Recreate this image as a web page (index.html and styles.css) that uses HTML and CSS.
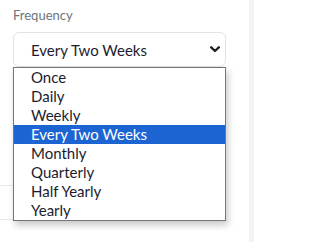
FILE: index.html
```html
<!DOCTYPE html>
<html>
<head>
<meta charset="utf-8">
<link rel="stylesheet" href="styles.css">
</head>
<body>
<div class="page">
  <main class="content">
    <label class="label">Frequency</label>
    <div class="field">
      <div class="select">
        <span class="value">Every Two Weeks</span>
        <svg class="chev" width="10" height="7" viewBox="0 0 10 7"><path d="M1.2 1.3 L5 5 L8.8 1.3" fill="none" stroke="#222" stroke-width="2.4" stroke-linecap="round" stroke-linejoin="round"/></svg>
      </div>
      <ul class="menu">
        <li>Once</li>
        <li>Daily</li>
        <li>Weekly</li>
        <li class="active">Every Two Weeks</li>
        <li>Monthly</li>
        <li>Quarterly</li>
        <li>Half Yearly</li>
        <li>Yearly</li>
      </ul>
    </div>
    <div class="rules">
      <div class="rule"></div>
      <div class="rule"></div>
    </div>
  </main>
  <aside class="strip"></aside>
</div>
</body>
</html>
```
FILE: styles.css
```css
html, body {
  margin: 0;
  padding: 0;
  background: #fff;
}
body {
  font-family: "Lato", "Open Sans", sans-serif;
  color: #212529;
}
.page {
  display: grid;
  grid-template-columns: 249px 5px;
  width: 254px;
  height: 242px;
}
.strip {
  background: #f1f3f5;
}
.content {
  display: flex;
  flex-direction: column;
}
.label {
  display: block;
  margin: 7px 0 0 13px;
  height: 25px;
  font-size: 13px;
  color: #6c757d;
  line-height: 17px;
}
.field {
  position: relative;
  margin-left: 13px;
  width: 213px;
}
.select {
  box-sizing: border-box;
  height: 35px;
  border: 1px solid #dfe3e8;
  border-radius: 6px;
  display: flex;
  align-items: center;
  justify-content: space-between;
  padding: 0 5px 0 17px;
  font-size: 15px;
  color: #1c1c2e;
}
.chev {
  display: block;
  margin-right: 0;
}
.menu {
  position: absolute;
  top: 35px;
  left: 0;
  width: 213px;
  box-sizing: border-box;
  margin: 0;
  padding: 0;
  list-style: none;
  background: #fff;
  border: 1px solid #767676;
  box-shadow: 2px 4px 7px rgba(0, 0, 0, 0.22);
  z-index: 2;
}
.menu li {
  height: 19px;
  line-height: 19px;
  padding-left: 17px;
  font-size: 15px;
  color: #1c1c2e;
}
.menu li.active {
  background: #1b64d2;
  color: #fff;
}
.rules {
  margin-top: 118px;
  display: flex;
  flex-direction: column;
  gap: 33px;
}
.rule {
  width: 120px;
  height: 1px;
  background: #e6e9ed;
}
```
